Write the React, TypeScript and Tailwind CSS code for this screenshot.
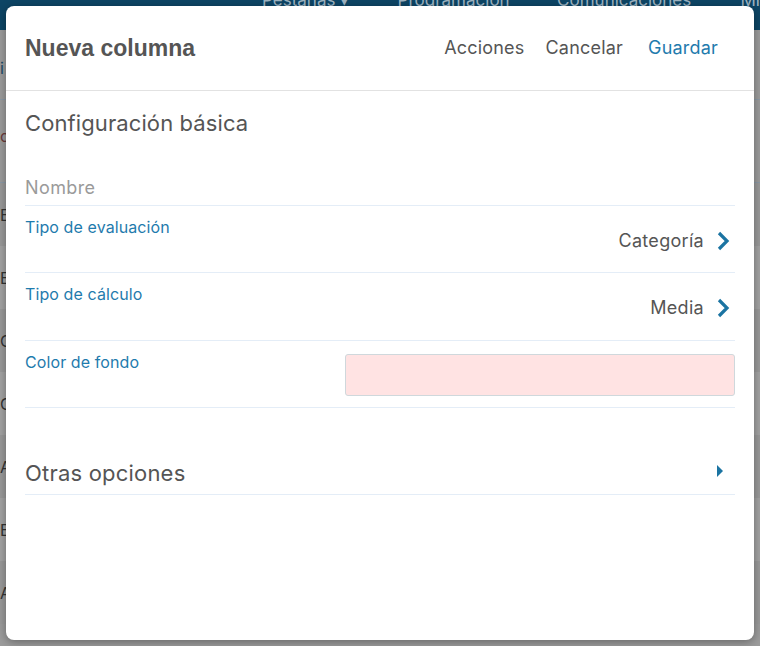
const rows = [
  { label: "Tipo de evaluación", value: "Categoría", h: "h-[67px]" },
  { label: "Tipo de cálculo", value: "Media", h: "h-[68px]" },
];

const bgRows = ["B", "E", "C", "C", "A", "E", "A"];

function Chevron() {
  return (
    <svg width="14" height="20" viewBox="0 0 14 20" className="text-[#1b74a2]">
      <polyline points="3,2 11,10 3,18" fill="none" stroke="currentColor" strokeWidth="3.2" strokeLinejoin="miter" />
    </svg>
  );
}

export default function App() {
  return (
    <div className="relative w-[760px] h-[646px] overflow-hidden bg-[#9c9c9c] font-['Inter',sans-serif]">
      {/* page behind the dialog, already dimmed */}
      <div className="h-[30px] bg-[#0d4565] overflow-hidden">
        <div className="flex text-[17px] text-[#9fb4c2] pl-[262px] -mt-[10px] leading-[20px]">
          <span className="w-[136px]">Pestañas ▾</span>
          <span className="w-[160px]">Programación</span>
          <span className="w-[184px]">Comunicaciones</span>
          <span>Mi</span>
        </div>
      </div>
      <div className="flex flex-col">
        <div className="h-[70px] border-b border-[#8c9aa6] text-[16px] text-[#1a4a66] pt-[26px]">i</div>
        <div className="h-[83px] border-b border-[#8c9aa6] text-[16px] text-[#6b3a3a] pt-[24px]">c</div>
        {bgRows.map((l, i) => (
          <div key={i} className={`h-[63px] flex items-center text-[16px] text-[#333] ${i % 2 ? "bg-[#a3a3a3]" : "bg-[#9a9a9a]"}`}>{l}</div>
        ))}
      </div>

      {/* dialog */}
      <div className="absolute left-[6px] top-[6px] w-[748px] h-[634px] bg-white rounded-[8px] shadow-[0_2px_10px_rgba(0,0,0,0.35)] flex flex-col">
        <div className="h-[85px] flex items-center justify-between px-[19px] border-b border-[#e2e2e2]">
          <h1 className="font-['Liberation_Sans',sans-serif] font-bold text-[23px] text-[#555] pt-[1px]">Nueva columna</h1>
          <div className="flex items-center gap-[21px] text-[18px] tracking-[0.2px] pr-[17px] -mt-[1px]">
            <span className="text-[#555]">Acciones</span>
            <span className="text-[#555]">Cancelar</span>
            <span className="text-[#1f7bad] ml-[4px]">Guardar</span>
          </div>
        </div>

        <div className="px-[19px] pt-[14px]">
          <h2 className="text-[22px] tracking-[0.1px] text-[#555] leading-[36px]">Configuración básica</h2>

          <div className="mt-[35px] pb-[5px] border-b border-[#e4edf7] text-[18px] tracking-[0.4px] text-[#9a9a9a] leading-[24px]">Nombre</div>

          {rows.map((r) => (
            <div key={r.label} className={`${r.h} border-b border-[#e4edf7] flex justify-between pt-[10px]`}>
              <span className="text-[16px] tracking-[0.1px] text-[#1f7bad] leading-[22px]">{r.label}</span>
              <span className="flex items-center gap-[12px] mt-[14px] self-start text-[18px] tracking-[0.3px] text-[#555] leading-[22px] mr-[5px]">
                {r.value}
                <Chevron />
              </span>
            </div>
          ))}

          <div className="h-[67px] border-b border-[#e4edf7] flex justify-between pt-[10px]">
            <span className="text-[16px] tracking-[0.1px] text-[#1f7bad] leading-[22px]">Color de fondo</span>
            <div className="w-[390px] h-[42px] mt-[3px] bg-[#ffe3e3] border border-[#cfd8dc] rounded-[3px]" />
          </div>

          <div className="mt-[43px] h-[44px] border-b border-[#e4edf7] flex justify-between items-start">
            <h2 className="text-[22px] tracking-[0.2px] text-[#555] leading-[34px] mt-[5px]">Otras opciones</h2>
            <svg width="6" height="12" viewBox="0 0 6 12" className="mt-[14px] mr-[12px]">
              <polygon points="0,0 6,6 0,12" fill="#1b74a2" />
            </svg>
          </div>
        </div>
      </div>
    </div>
  );
}
